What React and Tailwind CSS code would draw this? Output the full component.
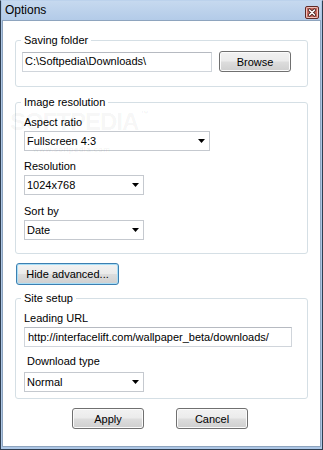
import React from 'react';

const font = { fontFamily: '"Liberation Sans", Arial, sans-serif' };

const btnBase =
  'h-[21px] w-[72px] rounded-[3px] border border-[#707070] bg-[linear-gradient(to_bottom,#f2f2f2_0%,#ebebeb_48%,#dddddd_52%,#cfcfcf_100%)] shadow-[inset_0_0_0_1px_#fbfbfb] text-[11px] leading-[14px] text-black flex items-center justify-center';

const Arrow = () => (
  <svg width="7" height="4" viewBox="0 0 7 4" className="shrink-0">
    <path d="M0 0 H7 L3.5 4 Z" fill="#000" />
  </svg>
);

const Combo = ({ value, width }) => (
  <div
    className={`${width} h-[20px] border border-[#c5c9cf] bg-white flex items-center justify-between pl-[2px] pr-[4px] text-[11px] text-black`}
  >
    <span>{value}</span>
    <Arrow />
  </div>
);

const Group = ({ title, children, className = '' }) => (
  <fieldset className={`border border-[#d5dfe5] rounded-[3px] ${className}`}>
    <legend className="ml-[5px] px-[3px] text-[11px] leading-[14px] text-black">{title}</legend>
    {children}
  </fieldset>
);

const Label = ({ children, className = '' }) => (
  <div className={`text-[11px] leading-[14px] text-black ${className}`}>{children}</div>
);

const CloseButton = () => (
  <svg width="14" height="13" viewBox="0 0 14 13">
    <rect x="0.5" y="0.5" width="13" height="12" rx="1.5" fill="#d98d84" stroke="#5e2b27" />
    <rect x="1.5" y="1.5" width="11" height="10" rx="1" fill="#c96a60" stroke="#f0c4be" />
    <path d="M4.5 4 L9.5 9 M9.5 4 L4.5 9" stroke="#4a2320" strokeWidth="3.2" strokeLinecap="round" />
    <path d="M4.5 4 L9.5 9 M9.5 4 L4.5 9" stroke="#ffffff" strokeWidth="1.6" strokeLinecap="round" />
  </svg>
);

export default function App() {
  return (
    <div style={font} className="w-[323px] h-[450px] bg-white">
      <div className="w-[323px] h-[450px] flex flex-col border border-[#2f3e50] border-t-[#bcd2ec] bg-[#adc7e6] px-[1px] pb-[2px]">
        <div className="h-[19px] flex items-center justify-between bg-[linear-gradient(to_bottom,#c6d9ef,#b3cbe8)] pl-[3px] pr-[2px]">
          <span className="text-[12px] leading-[15px] text-black">Options</span>
          <div className="mt-[3px]">
            <CloseButton />
          </div>
        </div>
        <div className="relative flex-1 bg-white border border-[#8ea4be] px-[12px] pt-[12px]">
          <Group title="Saving folder">
            <div className="flex items-center pl-[6px] pt-[4px] pb-[14px]">
              <div className="w-[190px] h-[20px] border border-[#d0d5db] border-t-[#b6bac1] flex items-center pl-[2px] text-[11px] text-black">
                C:\Softpedia\Downloads\
              </div>
              <button className={`${btnBase} ml-[7px]`}>Browse</button>
            </div>
          </Group>

          <Group title="Image resolution" className="mt-[8px]">
            <div className="pl-[8px] pt-[6px] pb-[13px]">
              <Label>Aspect ratio</Label>
              <div className="mt-[2px]">
                <Combo value="Fullscreen 4:3" width="w-[186px]" />
              </div>
              <Label className="mt-[8px]">Resolution</Label>
              <div className="mt-[2px]">
                <Combo value="1024x768" width="w-[120px]" />
              </div>
              <Label className="mt-[9px]">Sort by</Label>
              <div className="mt-[2px]">
                <Combo value="Date" width="w-[120px]" />
              </div>
            </div>
          </Group>

          <button className="mt-[9px] ml-[1px] h-[22px] w-[103px] rounded-[3px] border border-[#3c7fb1] bg-[linear-gradient(to_bottom,#f2f2f2_0%,#ebebeb_48%,#dddddd_52%,#cfcfcf_100%)] shadow-[inset_0_0_0_1px_#a8def7] text-[11px] leading-[14px] text-black flex items-center justify-center">
            Hide advanced...
          </button>

          <Group title="Site setup" className="mt-[6px]">
            <div className="pl-[8px] pt-[6px] pb-[6px]">
              <Label>Leading URL</Label>
              <div className="mt-[2px] w-[268px] h-[20px] border border-[#d0d5db] border-t-[#b6bac1] flex items-center pl-[3px] text-[11px] text-black">
                http://interfacelift.com/wallpaper_beta/downloads/
              </div>
              <Label className="mt-[7px] ml-[3px]">Download type</Label>
              <div className="mt-[4px]">
                <Combo value="Normal" width="w-[120px]" />
              </div>
            </div>
          </Group>

          <div className="mt-[9px] flex justify-center gap-[32px] pr-[3px]">
            <button className={btnBase}>Apply</button>
            <button className={btnBase}>Cancel</button>
          </div>

          <div className="pointer-events-none absolute left-[7px] top-[89px] flex items-start">
            <span className="text-[24px] leading-[24px] font-bold tracking-[-1px] text-black/[0.05]">SOFTPEDIA</span>
            <span className="ml-[2px] text-[8px] leading-[8px] text-black/[0.08]">™</span>
          </div>
          <div className="pointer-events-none absolute left-[30px] top-[124px] text-[8px] leading-[9px] tracking-[0.5px] text-black/[0.08]">
            www.softpedia.com
          </div>
        </div>
      </div>
    </div>
  );
}
